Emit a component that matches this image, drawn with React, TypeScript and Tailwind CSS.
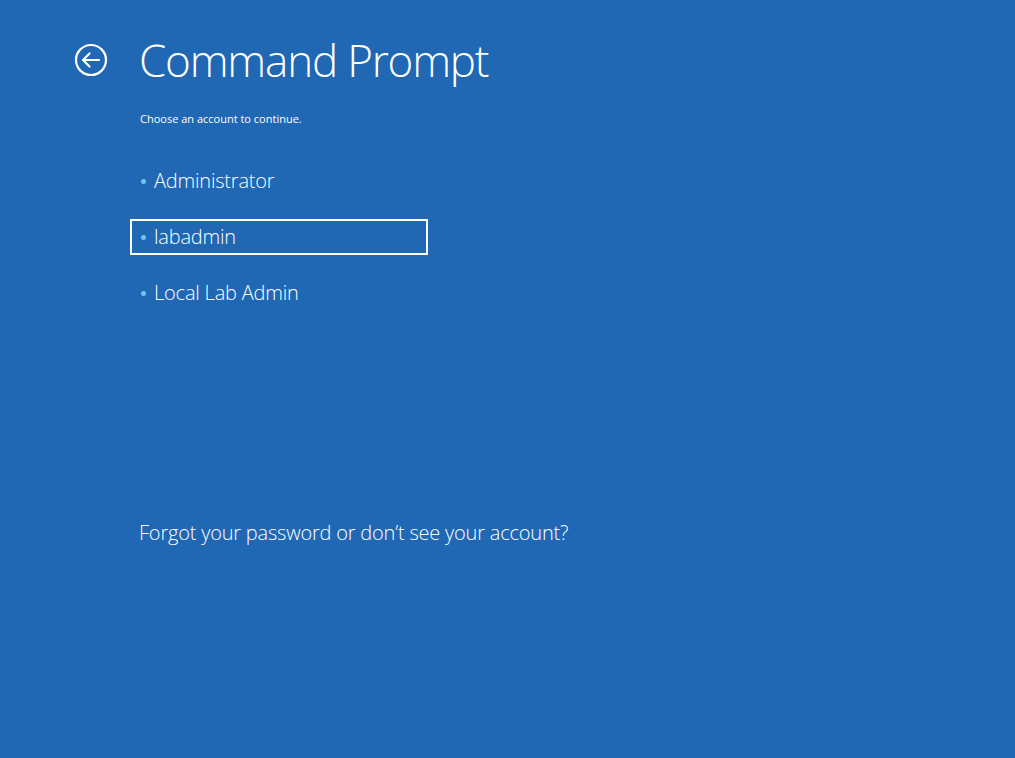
const accounts = [
  { name: "Administrator", selected: false },
  { name: "labadmin", selected: true },
  { name: "Local Lab Admin", selected: false },
];

function BackIcon() {
  return (
    <svg width="34" height="34" viewBox="0 0 34 34" fill="none" stroke="white" strokeWidth="2.2">
      <circle cx="17" cy="17" r="15" />
      <path d="M25 17H9.5M15.5 10.5L9 17l6.5 6.5" strokeLinecap="round" strokeLinejoin="round" />
    </svg>
  );
}

export default function App() {
  return (
    <div
      className="h-[758px] w-full overflow-hidden bg-[#2067b4] text-white"
      style={{ fontFamily: '"Open Sans", "Noto Sans", sans-serif' }}
    >
      <div className="flex items-center pl-[74px] pt-[30px]">
        <button type="button" className="flex h-[34px] w-[34px] items-center justify-center">
          <BackIcon />
        </button>
        <h1 className="ml-[31px] text-[44px] font-light leading-[60px] tracking-[-1.2px]">
          Command Prompt
        </h1>
      </div>

      <div className="pl-[139px]">
        <p className="mt-[21px] ml-[1px] text-[11px] leading-[16px]">Choose an account to continue.</p>

        <ul className="mt-[36px] flex flex-col gap-[20px]">
          {accounts.map((a) => (
            <li
              key={a.name}
              className={
                "-ml-[9px] flex h-[36px] w-[298px] items-center border-2 pl-[9px] " +
                (a.selected ? "border-white" : "border-transparent")
              }
            >
              <span className="mr-[8px] h-[5px] w-[5px] rounded-full bg-[#6ec6f2]" />
              <span className="text-[20px] font-light leading-none tracking-[-0.2px]">{a.name}</span>
            </li>
          ))}
        </ul>

        <p className="mt-[208px] text-[20px] font-light leading-[28px] tracking-[-0.2px]">
          Forgot your password or don’t see your account?
        </p>
      </div>
    </div>
  );
}
